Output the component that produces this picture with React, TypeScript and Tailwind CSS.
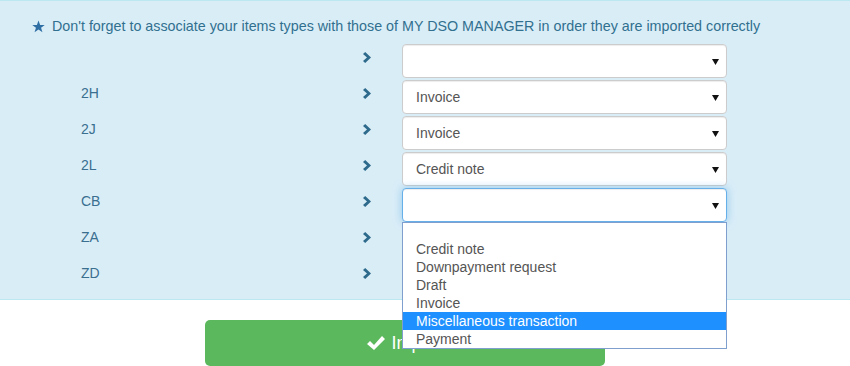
import React from "react";

type Row = {
  code: string;
  value: string;
  focused?: boolean;
};

const ROWS: Row[] = [
  { code: "", value: "" },
  { code: "2H", value: "Invoice" },
  { code: "2J", value: "Invoice" },
  { code: "2L", value: "Credit note" },
  { code: "CB", value: "", focused: true },
  { code: "ZA", value: "" },
  { code: "ZD", value: "" },
];

const OPTIONS = [
  "",
  "Credit note",
  "Downpayment request",
  "Draft",
  "Invoice",
  "Miscellaneous transaction",
  "Payment",
];

function Chevron() {
  return (
    <svg width="9" height="11" viewBox="0 0 9 11" className="block">
      <polygon points="0,2 2.2,0 8,5.5 2.2,11 0,9 4,5.5" fill="#2d6a8b" />
    </svg>
  );
}

function Caret() {
  return (
    <svg width="7" height="6" viewBox="0 0 7 6" className="block">
      <polygon points="0,0 7,0 3.5,6" fill="#111" />
    </svg>
  );
}

function FakeSelect({ value, focused }: { value: string; focused?: boolean }) {
  return (
    <div
      className={
        focused
          ? "relative flex h-[34px] w-[325px] items-center rounded-[4px] border border-[#66afe9] bg-white pl-[13px] text-[14px] text-[#555] shadow-[inset_0_1px_1px_rgba(0,0,0,0.075),0_0_8px_rgba(102,175,233,0.6)]"
          : "relative flex h-[34px] w-[325px] items-center rounded-[4px] border border-[#ccc] bg-white pl-[13px] text-[14px] text-[#555] shadow-[inset_0_1px_1px_rgba(0,0,0,0.075)]"
      }
    >
      <span>{value}</span>
      <span className="absolute right-[7px] top-[14px]">
        <Caret />
      </span>
    </div>
  );
}

export default function App() {
  return (
    <div className="relative h-[366px] w-full overflow-hidden bg-white font-['Liberation_Sans',Arial,sans-serif]">
      <div className="h-[300px] border-y border-[#bce8f1] bg-[#d9edf7]">
        <p className="flex items-center pl-[32px] pt-[15px] text-[14.3px] leading-[20px] text-[#31708f]">
          <svg width="13" height="13" viewBox="0 0 24 24" className="mr-[7px]">
            <polygon
              points="12,1 15,9 23.5,9 16.7,14.2 19.3,22.8 12,17.6 4.7,22.8 7.3,14.2 0.5,9 9,9"
              fill="#2f6fa3"
            />
          </svg>
          Don't forget to associate your items types with those of MY DSO MANAGER in order they are imported correctly
        </p>

        <div className="mt-[8px]">
          {ROWS.map((row, index) => (
            <div key={index} className="mb-[2px] flex h-[34px] items-start">
              <div className="w-[363px] pl-[81px] pt-[3px] text-[14px] leading-[20px] text-[#3a6f8f]">
                {row.code}
              </div>
              <div className="w-[39px] pt-[8px]">
                <Chevron />
              </div>
              {index < 5 ? (
                <FakeSelect value={row.value} focused={row.focused} />
              ) : null}
            </div>
          ))}
        </div>
      </div>

      <div className="ml-[205px] mt-[20px] flex h-[46px] w-[400px] items-center justify-center rounded-[5px] bg-[#5cb85c] text-[18px] text-white">
        <svg width="18" height="15" viewBox="0 0 18 15" className="mr-[6px]">
          <polygon points="0,8 3,5 7,9 15,0 18,3 7,14" fill="#fff" />
        </svg>
        Import
      </div>

      <ul className="absolute left-[402px] top-[222px] w-[325px] border border-[#7f9fcf] bg-white text-[14px] leading-[18px] text-[#555]">
        {OPTIONS.map((option, index) => (
          <li
            key={index}
            className={
              option === "Miscellaneous transaction"
                ? "h-[18px] bg-[#1e90ff] pl-[13px] text-white"
                : index === 0
                  ? "h-[17px] pl-[13px]"
                  : "h-[18px] pl-[13px]"
            }
          >
            {option}
          </li>
        ))}
      </ul>
    </div>
  );
}
